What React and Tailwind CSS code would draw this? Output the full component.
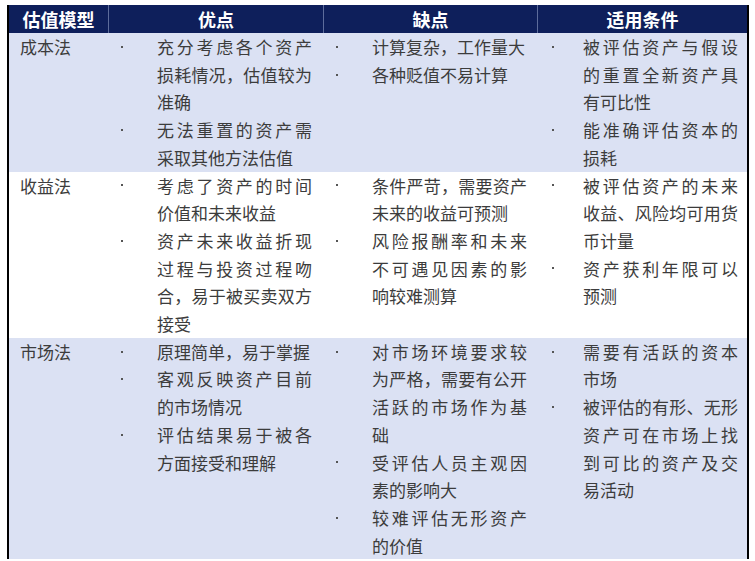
import React from 'react';

const rows = [
  {
    name: '成本法',
    bg: 'bg-[#dbe1f3]',
    pros: [
      ['充分考虑各个资产', '损耗情况，估值较为', '准确'],
      ['无法重置的资产需', '采取其他方法估值'],
    ],
    cons: [['计算复杂，工作量大'], ['各种贬值不易计算']],
    cond: [
      ['被评估资产与假设', '的重置全新资产具', '有可比性'],
      ['能准确评估资本的', '损耗'],
    ],
  },
  {
    name: '收益法',
    bg: 'bg-white',
    pros: [
      ['考虑了资产的时间', '价值和未来收益'],
      ['资产未来收益折现', '过程与投资过程吻', '合，易于被买卖双方', '接受'],
    ],
    cons: [
      ['条件严苛，需要资产', '未来的收益可预测'],
      ['风险报酬率和未来', '不可遇见因素的影', '响较难测算'],
    ],
    cond: [
      ['被评估资产的未来', '收益、风险均可用货', '币计量'],
      ['资产获利年限可以', '预测'],
    ],
  },
  {
    name: '市场法',
    bg: 'bg-[#dbe1f3]',
    pros: [
      ['原理简单，易于掌握'],
      ['客观反映资产目前', '的市场情况'],
      ['评估结果易于被各', '方面接受和理解'],
    ],
    cons: [
      ['对市场环境要求较', '为严格，需要有公开', '活跃的市场作为基', '础'],
      ['受评估人员主观因', '素的影响大'],
      ['较难评估无形资产', '的价值'],
    ],
    cond: [
      ['需要有活跃的资本', '市场'],
      ['被评估的有形、无形', '资产可在市场上找', '到可比的资产及交', '易活动'],
    ],
  },
];

function Bullets({ items, wide }) {
  return (
    <div className={wide ? 'pl-[13px]' : 'pl-[15px]'}>
      {items.map((lines, i) => (
        <div key={i} className="flex">
          <div className={`${wide ? 'w-[36px]' : 'w-[31px]'} h-[27.7px] flex items-center shrink-0`}>
            <span className="block w-[2px] h-[2px] bg-[#555]" />
          </div>
          <div className="w-[155px]">
            {lines.map((line, j) => (
              <div
                key={j}
                className={
                  j < lines.length - 1
                    ? 'text-justify [text-align-last:justify] whitespace-nowrap'
                    : 'whitespace-nowrap'
                }
              >
                {line}
              </div>
            ))}
          </div>
        </div>
      ))}
    </div>
  );
}

export default function App() {
  return (
    <div
      className="w-[755px] h-[561px] overflow-hidden bg-white pt-[5px]"
      style={{ fontFamily: '"Noto Sans CJK SC", "Noto Sans", sans-serif' }}
    >
      <div className="ml-[7px] w-[742px] border-x-2 border-black">
        {/* Header */}
        <div className="grid grid-cols-[99px_215px_214px_210px] h-[28px] bg-[#0e1f5b] text-white font-bold text-[18px] leading-[28px]">
          <div className="text-center">估值模型</div>
          <div className="text-center border-l border-[#5d6c9b]">优点</div>
          <div className="text-center border-l border-[#5d6c9b]">缺点</div>
          <div className="text-center border-l border-[#5d6c9b]">适用条件</div>
        </div>

        {/* Body */}
        {rows.map((row) => (
          <div
            key={row.name}
            className={`grid grid-cols-[99px_215px_214px_210px] ${row.bg} text-[#3c3c3c] text-[17px] leading-[27.7px]`}
          >
            <div className="pl-[11px]">{row.name}</div>
            <Bullets items={row.pros} wide />
            <Bullets items={row.cons} wide />
            <Bullets items={row.cond} />
          </div>
        ))}
      </div>
    </div>
  );
}
